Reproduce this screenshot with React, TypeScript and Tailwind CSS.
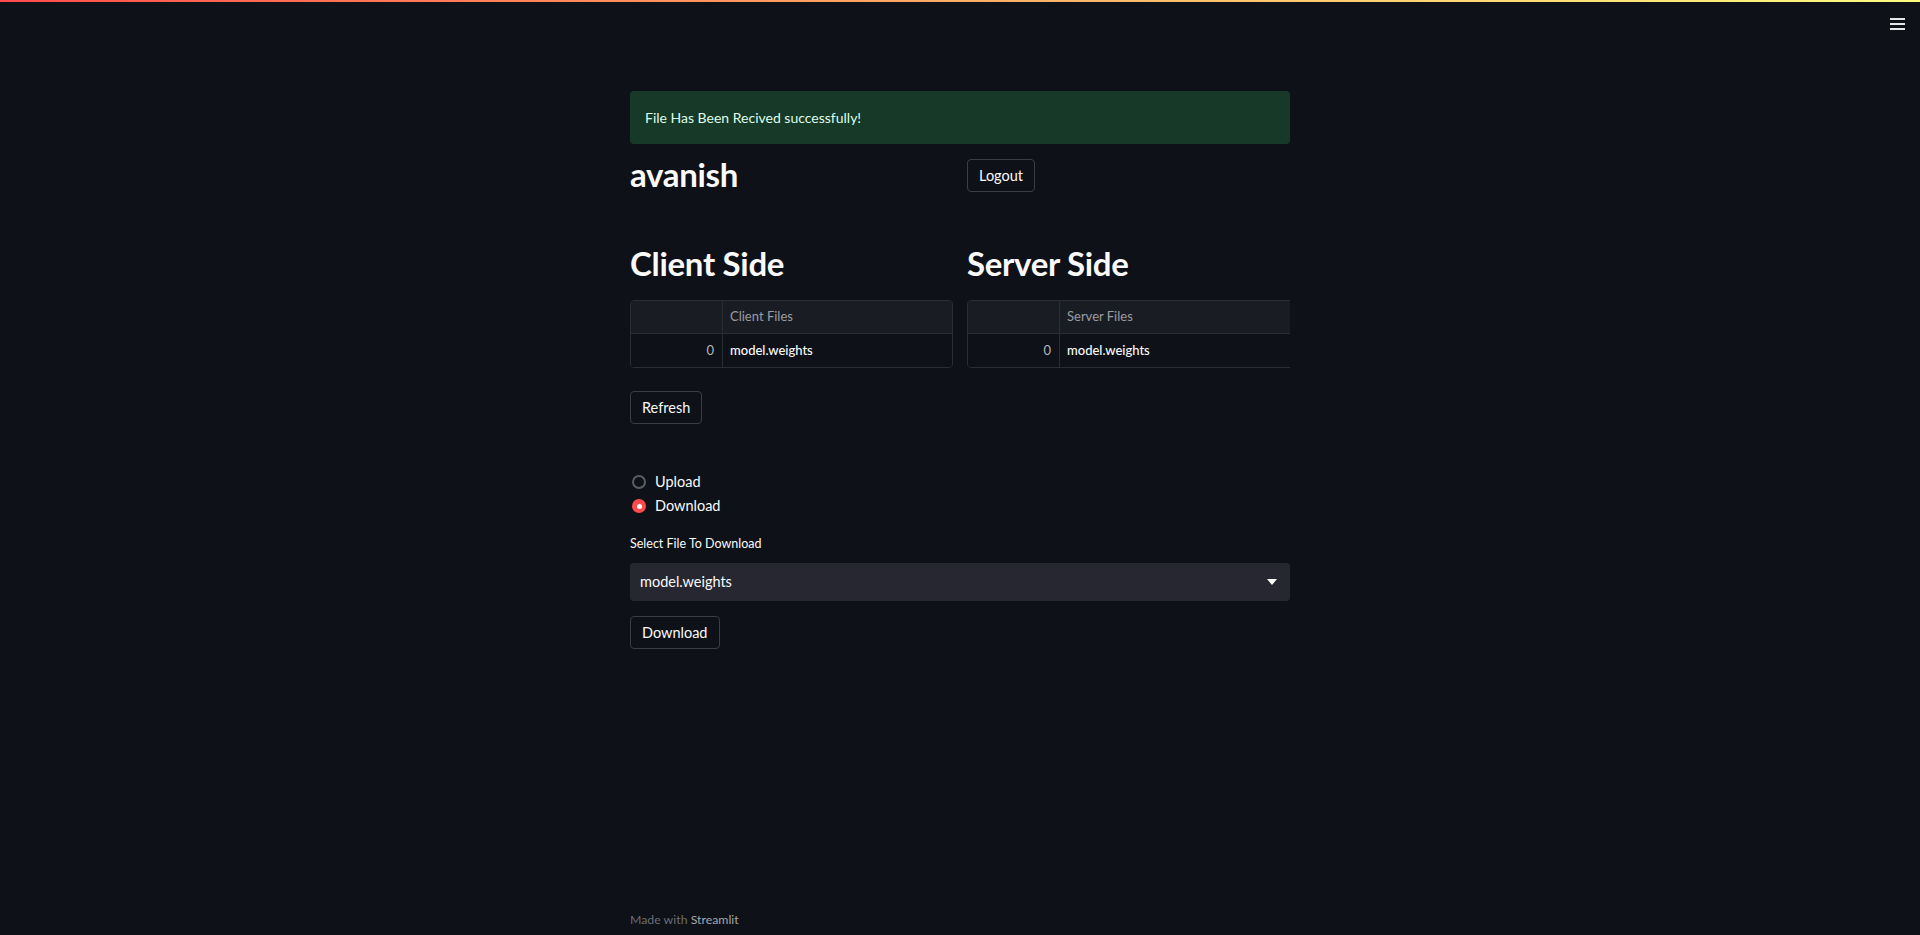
import { useState } from "react";

const files = ["model.weights"];

function FileTable({ title, wide }: { title: string; wide?: boolean }) {
  return (
    <div className="w-full overflow-hidden">
      <div
        className={`${wide ? "w-[360px]" : "w-full"} rounded-[4px] border border-[#2b2d35] overflow-hidden text-[13px]`}
      >
        <div className="flex h-[33px] bg-[#1a1c23] border-b border-[#2b2d35]">
          <div className="w-[92px] border-r border-[#2b2d35]" />
          <div className="flex-1 flex items-center px-[7px] text-[#9a9ca4]">{title}</div>
        </div>
        {files.map((f, i) => (
          <div key={f} className="flex h-[33px] bg-[#0e1117]">
            <div className="w-[92px] border-r border-[#2b2d35] flex items-center justify-end px-[8px] text-[#b4b6bc]">
              {i}
            </div>
            <div className="flex-1 flex items-center px-[7px] text-[#fafafa] font-medium">{f}</div>
          </div>
        ))}
      </div>
    </div>
  );
}

function Button({ children }: { children: string }) {
  return (
    <button className="h-[33px] px-[11px] rounded-[4px] border border-[#3b3e46] bg-[#0e1117] text-[#fafafa] text-[14.5px]">
      {children}
    </button>
  );
}

export default function App() {
  const [mode, setMode] = useState("Download");

  return (
    <div className="min-h-screen bg-[#0e1117] text-[#fafafa] font-['Lato',sans-serif] relative">
      {/* top decoration + menu */}
      <div className="absolute top-0 left-0 right-0 h-[2px] bg-gradient-to-r from-[#ff4b4b] to-[#fffd80]" />
      <div className="absolute top-[18px] right-[15px] flex flex-col gap-[3px]">
        <span className="block w-[15px] h-[2px] bg-[#e6e6e8]" />
        <span className="block w-[15px] h-[2px] bg-[#e6e6e8]" />
        <span className="block w-[15px] h-[2px] bg-[#e6e6e8]" />
      </div>

      <div className="mx-auto w-[660px] pt-[91px] pb-[6px] min-h-screen flex flex-col">
        <div className="h-[53px] rounded-[4px] bg-[#173928] text-[#dffde9] text-[14px] flex items-center px-[15px]">
          File Has Been Recived successfully!
        </div>

        <div className="grid grid-cols-2 gap-[14px] mt-[15px] items-start">
          <h2 className="text-[33px] font-bold leading-[30px] tracking-[-0.3px]">avanish</h2>
          <div>
            <Button>Logout</Button>
          </div>
        </div>

        <div className="grid grid-cols-2 gap-[14px] mt-[51px]">
          <div>
            <h2 className="text-[33px] font-bold leading-[40px] tracking-[-0.3px]">Client Side</h2>
            <div className="mt-[17px]">
              <FileTable title="Client Files" />
            </div>
          </div>
          <div>
            <h2 className="text-[33px] font-bold leading-[40px] tracking-[-0.3px]">Server Side</h2>
            <div className="mt-[17px]">
              <FileTable title="Server Files" wide />
            </div>
          </div>
        </div>

        <div className="mt-[23px]">
          <Button>Refresh</Button>
        </div>

        <div className="mt-[48px] flex flex-col gap-[4px] text-[14.5px]">
          {["Upload", "Download"].map((opt) => (
            <label key={opt} className="flex items-center gap-[9px] h-[20px] cursor-pointer" onClick={() => setMode(opt)}>
              {mode === opt ? (
                <span className="ml-[2px] w-[14px] h-[14px] rounded-full bg-[#ff4b4b] flex items-center justify-center">
                  <span className="w-[5px] h-[5px] rounded-full bg-white" />
                </span>
              ) : (
                <span className="ml-[2px] w-[14px] h-[14px] rounded-full border-2 border-[#5a5d65]" />
              )}
              <span>{opt}</span>
            </label>
          ))}
        </div>

        <div className="mt-[19px] text-[12.5px] leading-[18px]">Select File To Download</div>

        <div className="mt-[10px] h-[38px] rounded-[4px] bg-[#262730] flex items-center justify-between px-[10px] text-[14.5px]">
          <span>model.weights</span>
          <svg width="10" height="6" viewBox="0 0 10 6" className="mr-[3px]">
            <path d="M0 0h10L5 6z" fill="#fafafa" />
          </svg>
        </div>

        <div className="mt-[15px]">
          <Button>Download</Button>
        </div>

        <div className="mt-auto text-[12.3px] text-[#6b6d74]">
          Made with <span className="text-[#a5a7ac]">Streamlit</span>
        </div>
      </div>
    </div>
  );
}
